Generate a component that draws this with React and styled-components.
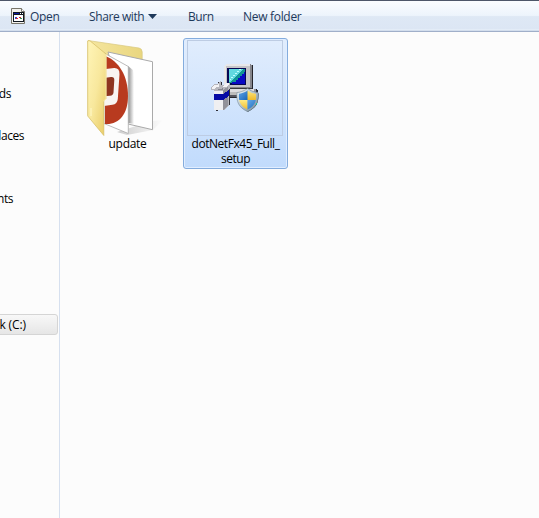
import React from 'react';
import styled, { createGlobalStyle } from 'styled-components';

const GlobalStyle = createGlobalStyle`
  * { box-sizing: border-box; }
  body { margin: 0; overflow: hidden; background: #fcfcfc; }
`;

const Window = styled.div`
  display: flex;
  flex-direction: column;
  width: 539px;
  height: 518px;
  overflow: hidden;
  background: #fcfcfc;
  color: #000;
  font: 12px/15px 'Open Sans', 'Noto Sans', sans-serif;
`;

const Toolbar = styled.header`
  display: flex;
  flex: 0 0 32px;
  align-items: center;
  padding: 0 0 0 11px;
  border-top: 1px solid #4d5669;
  border-bottom: 1px solid #a0afc9;
  background: linear-gradient(#fafcff 0%, #edf4fc 48%, #dee8f5 52%, #dce6f4 93%, #e8f0fa 94%, #cbd7e8 100%);
  color: #1e395b;
`;

const ToolButton = styled.div`
  display: flex;
  align-items: center;
  width: ${({ $width }) => $width}px;
  height: 28px;
  white-space: nowrap;
  letter-spacing: ${({ $spacing = -0.3 }) => $spacing}px;
`;

const OpenIcon = styled.svg`
  width: 15px;
  height: 17px;
  margin-right: 4px;
`;

const Arrow = styled.svg`
  width: 9px;
  height: 5px;
  margin: 1px 0 0 4px;
`;

const Body = styled.div`
  display: flex;
  flex: 1;
  min-height: 0;
`;

const Sidebar = styled.nav`
  display: flex;
  flex: 0 0 60px;
  flex-direction: column;
  padding-top: 51px;
  border-right: 1px solid #d6e0ef;
  overflow: hidden;
`;

const SideItem = styled.div`
  display: flex;
  flex: 0 0 21px;
  align-items: center;
  justify-content: flex-end;
  width: ${({ $width }) => $width}px;
  margin-bottom: ${({ $gap }) => $gap}px;
  white-space: nowrap;
  letter-spacing: -0.45px;
`;

const SelectedDrive = styled(SideItem)`
  width: 59px;
  margin-left: -1px;
  padding-right: 31px;
  border: 1px solid #d5d5d5;
  border-radius: 0 3px 3px 0;
  background: linear-gradient(#f8f8f8, #e6e6e6);
  letter-spacing: -0.1px;
`;

const Files = styled.main`
  display: flex;
  align-items: flex-start;
  gap: 4px;
  padding: 6px 0 0 15px;
`;

const FileTile = styled.div`
  display: flex;
  flex-direction: column;
  align-items: flex-start;
  width: ${({ $selected }) => ($selected ? 105 : 104)}px;
  height: 131px;
  border: 1px solid ${({ $selected }) => ($selected ? '#84acdd' : 'transparent')};
  border-radius: 3px;
  background: ${({ $selected }) => ($selected ? 'linear-gradient(#e1edfd, #c1dbfc)' : 'none')};
  box-shadow: ${({ $selected }) => ($selected ? 'inset 0 0 0 1px #e0edff' : 'none')};
`;

const IconFrame = styled.div`
  display: flex;
  width: 96px;
  height: 96px;
  margin: 1px 0 0 3px;
  border: 1px solid ${({ $selected }) => ($selected ? '#bdcce3' : 'transparent')};
`;

const FileName = styled.div`
  width: 103px;
  text-align: center;
  white-space: pre-line;
  letter-spacing: ${({ $spacing }) => $spacing}px;
`;

const FileIcon = styled.svg`
  width: 94px;
  height: 94px;
  overflow: visible;
`;

function ProgramIcon() {
  return (
    <OpenIcon viewBox="0 0 15 17">
      <path d="M.5.5h10l3 3v12H.5z" fill="#f2f1ed" stroke="#777469" />
      <path d="M10.5.5v3h3" fill="#fff" stroke="#77756e" />
      <g shapeRendering="crispEdges">
        <path d="M2 4h11v10H2z" fill="#111820" />
        <path d="M3 7h9v6H3z" fill="#fff" />
        <path d="M3 5h5v1H3z" fill="#0818a0" />
        <path d="M9 5h1v1H9zM11 5h1v1h-1z" fill="#fff" />
        <path d="M4 9h2v2H4z" fill="#3445d0" />
        <path d="M5 10h2v1H5zM8 9h2v1H8z" fill="#df2028" />
        <path d="M9 10h2v1H9z" fill="#2c9c60" />
      </g>
    </OpenIcon>
  );
}

function FolderIcon() {
  return (
    <FileIcon viewBox="80 41 94 94">
      <defs>
        <linearGradient id="flap" x1="0" y1="0" x2="1" y2="1">
          <stop stopColor="#fff5b8" />
          <stop offset=".5" stopColor="#f8e89d" />
          <stop offset="1" stopColor="#e8ca63" />
        </linearGradient>
        <linearGradient id="back">
          <stop stopColor="#f5e69f" />
          <stop offset="1" stopColor="#e9d67f" />
        </linearGradient>
        <linearGradient id="shade">
          <stop stopColor="#8c8c8c" />
          <stop offset="1" stopColor="#fff" />
        </linearGradient>
        <linearGradient id="cast">
          <stop stopColor="#777" stopOpacity=".35" />
          <stop offset="1" stopColor="#777" stopOpacity="0" />
        </linearGradient>
        <clipPath id="page"><path d="M104 53 128.3 66.5V133.5L104 123.5z" /></clipPath>
      </defs>
      <path d="m152 121 11-1-10 10-26 5-10-3z" fill="url(#cast)" />
      <path d="M88 40.5 139 48q3 .5 3.2 4v12l-54 51z" fill="url(#back)" stroke="#d9c980" strokeWidth=".7" />
      <path d="m108 52 44.5 9.7v68L128 124z" fill="#fff" stroke="#aaa" />
      <path d="m128 66 5 4q1 3 1 7v47l-6-1z" fill="url(#shade)" />
      <path d="M104 53 128.3 66.5V133.5L104 123.5z" fill="#fff" stroke="#aaa" strokeWidth=".8" />
      <g clipPath="url(#page)">
        <path d="M105 56C119 61 128 76 128 96c0 18-9 29-23 28z" fill="#b83a1f" />
        <path d="M104 69.3 114 68q5.7-.3 5.5 6.2L117.8 99q-.5 5.2-5.4 5.8L104 106z" fill="#f8f4f1" />
        <path d="M104 78 111 77q3.5-.3 3.3 3l-.8 12.5q-.2 3-3.5 3.2l-6 .5z" fill="#8e3521" />
      </g>
      <path d="M87.7 41q1-1.2 3 .4L106 54v45l-2.2 2v34.5L87.7 116z" fill="url(#flap)" stroke="#d4bb62" strokeWidth=".7" />
      <path d="m106 54v45l-2.5 2" fill="none" stroke="#fff2b5" />
      <path d="M91 108v8" stroke="#fff9c9" />
    </FileIcon>
  );
}

function InstallerIcon() {
  return (
    <FileIcon viewBox="188 41 94 94">
      <defs>
        <linearGradient id="shieldEdge" x2="1" y2="1">
          <stop stopColor="#f5fbff" /><stop offset="1" stopColor="#718997" />
        </linearGradient>
        <linearGradient id="gold" x2="0" y2="1">
          <stop stopColor="#ffeb83" /><stop offset="1" stopColor="#efb92a" />
        </linearGradient>
        <linearGradient id="blue" x2="1" y2="1">
          <stop stopColor="#68aae9" /><stop offset="1" stopColor="#1765b8" />
        </linearGradient>
        <clipPath id="shield"><path d="M247.5 90.5q3.5 3 8.5 3.2c.6 7-1 12.5-8.5 15.8-7.5-3.3-9.1-8.8-8.5-15.8 5-.2 8.5-3.2 8.5-3.2z" /></clipPath>
      </defs>
      <g shapeRendering="crispEdges">
        <path d="M226 65h26l1 1v23h3l2 2v7h-29v-2h-3z" fill="#25252b" />
        <path d="M224 66l2-2h25l1 2v21l-1 1h-25l-2-1z" fill="#85858b" />
        <path d="M224 66l2-2h24v2h-22v21h-4z" fill="#e8e8ea" />
        <path d="M226 66h24v21h-24z" fill="#c5c5c9" />
        <path d="M227 68h19v17h-19z" fill="#060754" />
        <path d="M229 69h16v14h-16z" fill="#129394" />
        <path d="M229 69h14l-13 13h-1z" fill="#61d9df" />
        <path d="M230 79h1v-2h2v-2h2v-2h2v-2h2v-2h2" fill="none" stroke="#c0ffff" strokeDasharray="1 1" />
        <path d="M245 72v12h-13v-2h4v-2h2v-2h2v-2h2v-2h2v-2z" fill="#0909c4" />
        <path d="M229 89h27v7h-27z" fill="#919198" />
        <path d="M227 88h25v1h-25z" fill="#3a3a40" />
        <path d="M228 89h26v3h-26z" fill="#dedee0" />
        <path d="M230 92h9v3h-9z" fill="#bbb" />
        <path d="M229 95h11v2h-11z" fill="#55555d" />
        <path d="M212 89h6v-7h4v5h8v18l-5 4-9 2-2-2V91z" fill="#303038" />
        <path d="M211 87l3-3h4l2-3 1 1v3h3l2-2h4v5l-1 2v15l-5 5h-10V90h-3z" fill="#b7b7bd" />
        <path d="M214 91h9v19h-9z" fill="#efeff1" />
        <path d="M223 90l5-3v18l-5 5z" fill="#92929a" />
        <path d="M214 94h9v6h-9z" fill="#070ba5" />
        <path d="m223 94 6-4v6l-6 4z" fill="#070ba5" />
        <path d="M212 87l2-2h3l2-2v4h-3l-1 2h-3zm12-2 2-2h3v2l-3 2h-4z" fill="#f3f3f5" />
        <path d="M218 89h3l2-2v3h-5z" fill="#84848d" />
      </g>
      <path d="M248.5 89.5q4 3 10 3.8c.4 9.2-2.5 15-10.5 18.5l-2-1z" fill="#151b21" />
      <path d="M247.5 88.5q4.5 3.5 10.5 4c.8 9-1.5 15-10.5 19-9-4-11.3-10-10.5-19 6-.5 10.5-4 10.5-4z" fill="url(#shieldEdge)" stroke="#778c98" strokeWidth=".6" />
      <g clipPath="url(#shield)">
        <path d="M238 90h10v10h-10z" fill="url(#blue)" />
        <path d="M247.5 90h10v10h-10z" fill="url(#gold)" />
        <path d="M238 100h9.5v10H238z" fill="url(#gold)" />
        <path d="M247.5 100h10v10h-10z" fill="url(#blue)" />
      </g>
      <path d="M256 103h1v2h-1z" fill="#18bf9e" />
    </FileIcon>
  );
}

export default function App() {
  return (
    <>
      <GlobalStyle />
      <Window>
        <Toolbar>
          <ToolButton $width={78}><ProgramIcon />Open</ToolButton>
          <ToolButton $width={99} $spacing={-0.4}>
            Share with<Arrow viewBox="0 0 9 5"><path d="M0 0h9L4.5 5z" fill="#1e395b" /></Arrow>
          </ToolButton>
          <ToolButton $width={55} $spacing={-0.45}>Burn</ToolButton>
          <ToolButton $width={80}>New folder</ToolButton>
        </Toolbar>
        <Body>
          <Sidebar>
            <SideItem $width={11} $gap={21}>ds</SideItem>
            <SideItem $width={24} $gap={42}>laces</SideItem>
            <SideItem $width={13} $gap={105}>nts</SideItem>
            <SelectedDrive>k (C:)</SelectedDrive>
          </Sidebar>
          <Files>
            <FileTile>
              <IconFrame><FolderIcon /></IconFrame>
              <FileName $spacing={-0.3}>update</FileName>
            </FileTile>
            <FileTile $selected>
              <IconFrame $selected><InstallerIcon /></IconFrame>
              <FileName $spacing={-0.45}>{'dotNetFx45_Full_\nsetup'}</FileName>
            </FileTile>
          </Files>
        </Body>
      </Window>
    </>
  );
}
